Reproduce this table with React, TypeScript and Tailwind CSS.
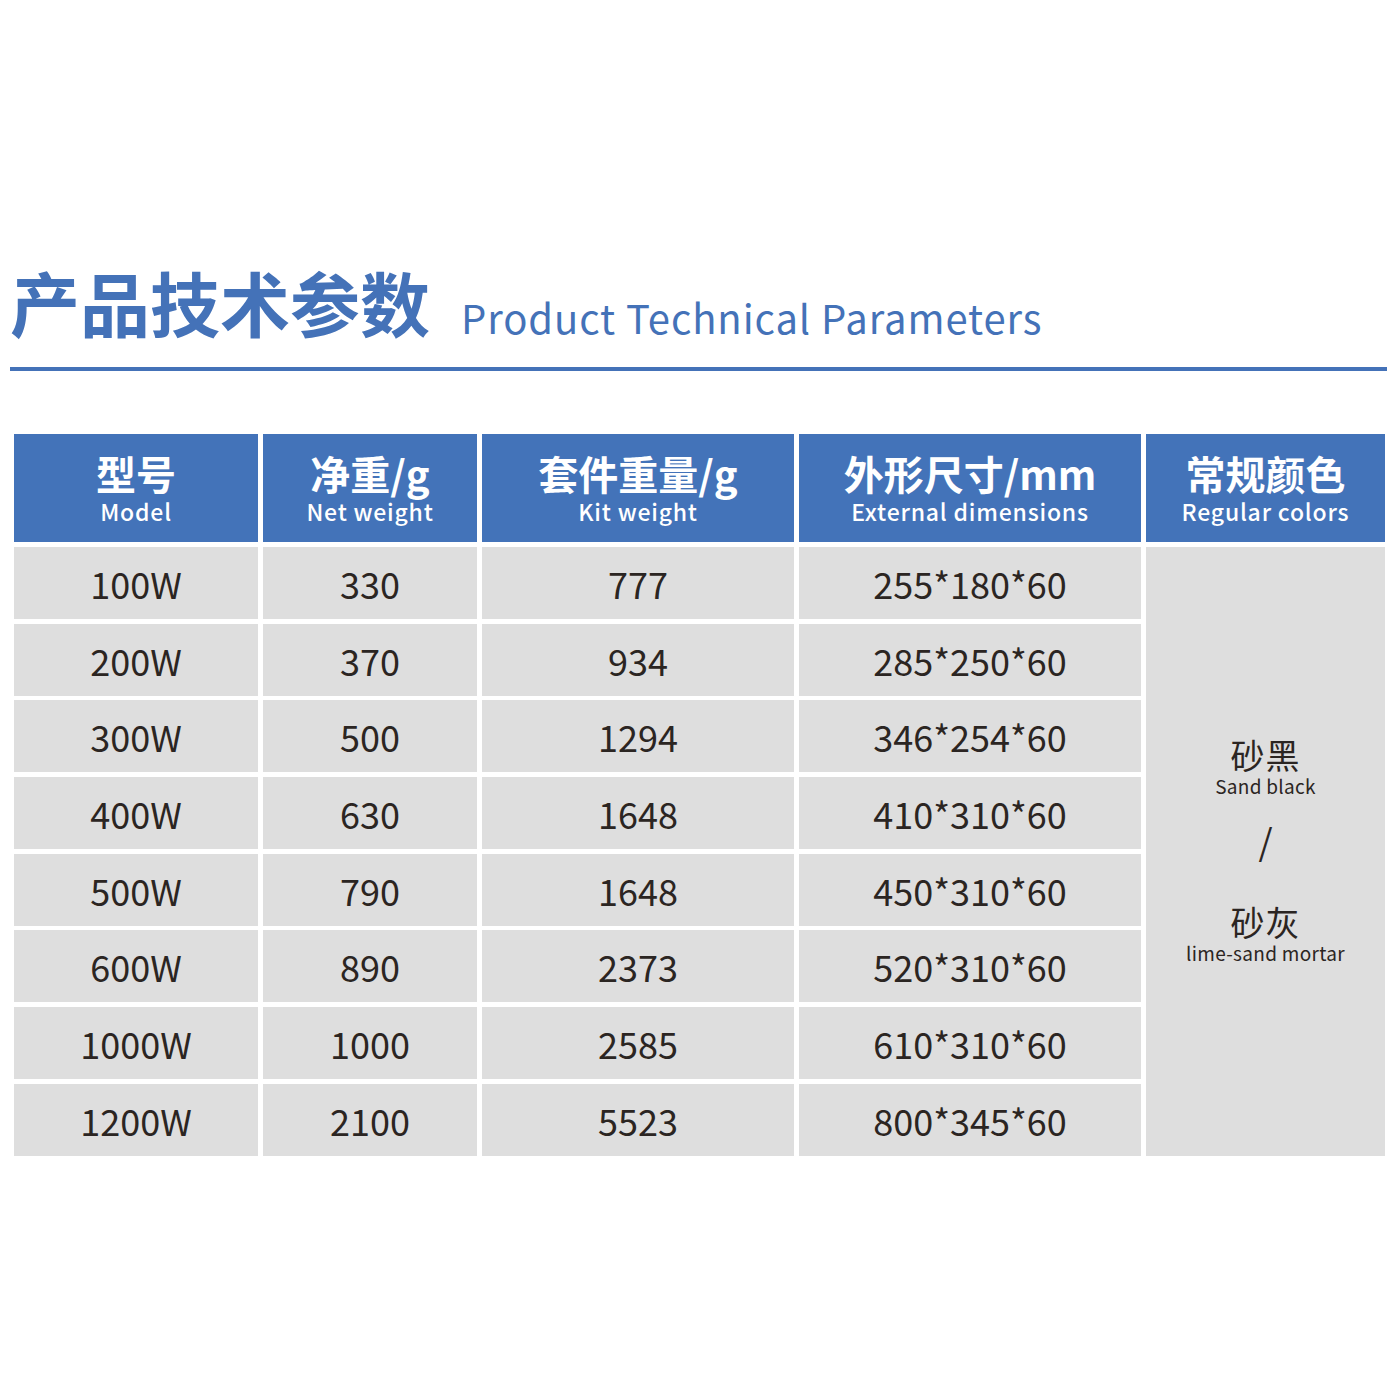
const rows = [
  ['100W', '330', '777', '255*180*60'],
  ['200W', '370', '934', '285*250*60'],
  ['300W', '500', '1294', '346*254*60'],
  ['400W', '630', '1648', '410*310*60'],
  ['500W', '790', '1648', '450*310*60'],
  ['600W', '890', '2373', '520*310*60'],
  ['1000W', '1000', '2585', '610*310*60'],
  ['1200W', '2100', '5523', '800*345*60'],
];

const headers = [
  ['型号', 'Model'],
  ['净重/g', 'Net weight'],
  ['套件重量/g', 'Kit weight'],
  ['外形尺寸/mm', 'External dimensions'],
  ['常规颜色', 'Regular colors'],
];

const font = "font-['Noto_Sans_CJK_SC',sans-serif]";

export default function App() {
  return (
    <div className={`w-[1400px] h-[1400px] bg-white ${font}`}>
      <div className="pt-[262px] pl-[10px] flex items-end">
        <span className="text-[70px] leading-[80px] font-bold text-[#4472b8]">产品技术参数</span>
        <span className="ml-[31px] mb-[1px] text-[40px] leading-[48px] text-[#4472b8] tracking-[0.9px]">
          Product Technical Parameters
        </span>
      </div>
      <div className="mt-[25px] ml-[10px] w-[1377px] h-[4px] bg-[#4472b8]" />

      <div className="mt-[63px] ml-[14px] grid grid-cols-[244px_214px_312px_342px_239px] gap-x-[5px]">
        {headers.map(([zh, en]) => (
          <div
            key={en}
            className="h-[108px] bg-[#4373b9] flex flex-col items-center justify-center text-white"
          >
            <div className="text-[40px] leading-[42px] font-bold">{zh}</div>
            <div className="text-[23px] leading-[26px] mt-[4px] font-medium tracking-[0.8px]">{en}</div>
          </div>
        ))}
      </div>

      <div className="mt-[5px] ml-[14px] grid grid-cols-[244px_214px_312px_342px_239px] grid-rows-[repeat(8,72px)] gap-x-[5px] gap-y-[4.7px] text-[#2b2522]">
        {rows.map((r, i) =>
          r.map((c, j) => (
            <div
              key={`${i}-${j}`}
              className="bg-[#dedede] flex items-center justify-center text-[36px]"
              style={{ gridRow: i + 1, gridColumn: j + 1 }}
            >
              {c}
            </div>
          )),
        )}
        <div className="col-start-5 row-start-1 row-span-8 bg-[#dedede] flex flex-col items-center justify-center">
          <div className="text-[34px] leading-[36px] tracking-[1px]">砂黑</div>
          <div className="text-[19px] leading-[24px] mt-[1px] tracking-[0.3px]">Sand black</div>
          <div className="text-[36px] leading-[44px] mt-[20px]">/</div>
          <div className="text-[34px] leading-[36px] mt-[42px] tracking-[1px]">砂灰</div>
          <div className="text-[19px] leading-[24px] mt-[1px] tracking-[0.3px]">lime-sand mortar</div>
        </div>
      </div>
    </div>
  );
}
